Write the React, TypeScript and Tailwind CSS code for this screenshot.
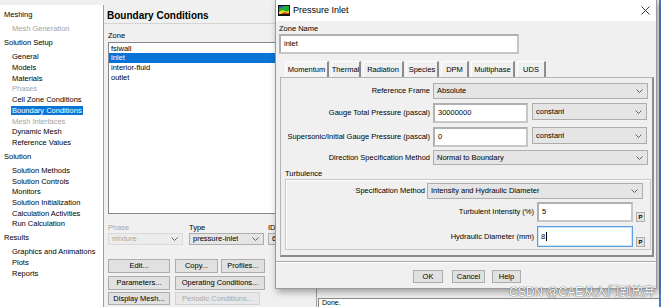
import React from 'react';

const navGroups: { title: string; items: [string, boolean?][] }[] = [
    { title: 'Meshing', items: [['Mesh Generation', true]] },
    {
        title: 'Solution Setup',
        items: [
            ['General'], ['Models'], ['Materials'], ['Phases', true], ['Cell Zone Conditions'],
            ['Boundary Conditions'], ['Mesh Interfaces', true], ['Dynamic Mesh'], ['Reference Values'],
        ],
    },
    {
        title: 'Solution',
        items: [
            ['Solution Methods'], ['Solution Controls'], ['Monitors'], ['Solution Initialization'],
            ['Calculation Activities'], ['Run Calculation'],
        ],
    },
    { title: 'Results', items: [['Graphics and Animations'], ['Plots'], ['Reports']] },
];

const tabs: [string, string][] = [
    ['Momentum', 'w-[44px]'],
    ['Thermal', 'w-[30px]'],
    ['Radiation', 'w-[41px]'],
    ['Species', 'w-[33px]'],
    ['DPM', 'w-[28px]'],
    ['Multiphase', 'w-[44px]'],
    ['UDS', 'w-[29px]'],
];

const Chevron = () => (
    <svg width="7" height="4" viewBox="0 0 7 4" className="shrink-0">
        <polyline points="0.5,0.5 3.5,3.5 6.5,0.5" fill="none" stroke="#606060" strokeWidth="1" />
    </svg>
);

const Select = ({ value, className, muted }: { value: string; className: string; muted?: boolean }) => (
    <div
        className={`flex shrink-0 items-center justify-between border pl-[3px] pr-[4px] ${
            muted ? 'border-[#d9d9d9] bg-[#ececec] text-[#a8a8a8]' : 'border-[#adadad] bg-[#e5e5e5] text-black'
        } ${className}`}
    >
        <span className="truncate">{value}</span>
        <Chevron />
    </div>
);

const Field = ({ value, className, focus }: { value: string; className: string; focus?: boolean }) => (
    <div
        className={`flex shrink-0 items-center bg-white pl-[3px] ${
            focus ? 'border border-[#5c9ce0] ring-1 ring-inset ring-[#cfe3f8]' : 'border-2 border-[#c6c6c6] border-t-[#b0b0b0] border-l-[#b0b0b0]'
        } ${className}`}
    >
        {value}
        {focus && <span className="ml-[1px] h-[9px] w-px bg-black" />}
    </div>
);

const Btn = ({ label, className, disabled }: { label: string; className: string; disabled?: boolean }) => (
    <div
        className={`flex shrink-0 items-center justify-center border ${
            disabled ? 'border-[#d3d3d3] bg-[#e8e8e8] text-[#a8a8a8]' : 'border-[#adadad] bg-[#e1e1e1] text-black'
        } ${className}`}
    >
        {label}
    </div>
);

const PBtn = () => (
    <div className="flex h-[10px] w-[9px] shrink-0 items-center justify-center self-end border border-[#adadad] bg-[#e1e1e1] text-[6px] font-bold">
        P
    </div>
);

const FluentIcon = () => (
    <svg width="12" height="11" viewBox="0 0 12 11">
        <rect x="0" y="0" width="12" height="11" fill="#111" />
        <rect x="1" y="1" width="10" height="9" fill="#1faa3a" />
        <path d="M1 7 Q4 4 7 6 T11 5 L11 10 L1 10 Z" fill="#e8e020" />
        <path d="M3 9 Q6 6 9 8 L11 8 L11 10 L3 10 Z" fill="#e03020" />
        <path d="M1 1 L6 1 Q4 3 1 3 Z" fill="#2050d0" />
        <rect x="1" y="9" width="10" height="1" fill="#1a1a1a" />
    </svg>
);

export default function App() {
    return (
        <div className="relative flex h-[307px] w-[661px] overflow-hidden bg-[#f0f0f0] font-['Liberation_Sans',Arial,sans-serif] text-[7.5px] leading-[10px] text-black">
            {/* navigation tree */}
            <nav className="mt-[5px] w-[104px] shrink-0 border-r border-[#a0a0a0] bg-white pt-[2px]">
                {navGroups.map(group => (
                    <div key={group.title}>
                        <div className="py-[3.3px] pl-[4px] leading-[10.7px]">{group.title}</div>
                        {group.items.map(([label, dim]) => (
                            <div key={label} className="pl-[11px] leading-[10.7px]">
                                <span
                                    className={
                                        label === 'Boundary Conditions'
                                            ? 'bg-[#0a74d6] px-[1px] text-white'
                                            : dim
                                            ? 'px-[1px] text-[#a3a3a3]'
                                            : 'px-[1px]'
                                    }
                                >
                                    {label}
                                </span>
                            </div>
                        ))}
                    </div>
                ))}
            </nav>

            {/* boundary conditions task page */}
            <section className="w-[212px] shrink-0 pt-[4px]">
                <div className="flex h-[20px] items-end border-b border-[#d4d4d4] pb-[1px] pl-[3px] text-[10px] font-bold leading-[12px]">
                    Boundary Conditions
                </div>
                <div className="mt-[7px] pl-[4px]">Zone</div>
                <div className="ml-[4px] mt-[1px] h-[172px] w-[210px] border border-[#828790] bg-white pt-[0.5px] leading-[9.7px]">
                    <div className="pl-[2px]">fsiwall</div>
                    <div className="bg-[#0a74d6] pl-[2px] text-white">inlet</div>
                    <div className="pl-[2px]">interior-fluid</div>
                    <div className="pl-[2px]">outlet</div>
                </div>
                <div className="ml-[4px] mt-[9px] flex gap-[6px]">
                    <div className="w-[75px]">
                        <div className="text-[#a8a8a8]">Phase</div>
                        <Select value="mixture" muted className="h-[12px] w-[75px]" />
                    </div>
                    <div className="w-[75px]">
                        <div>Type</div>
                        <Select value="pressure-inlet" className="h-[12px] w-[75px]" />
                    </div>
                    <div className="ml-[-2px] w-[40px]">
                        <div>ID</div>
                        <Select value="6" className="h-[12px] w-[40px]" />
                    </div>
                </div>
                <div className="ml-[4px] mt-[14px] flex gap-[5px]">
                    <Btn label="Edit..." className="h-[14px] w-[62px]" />
                    <Btn label="Copy..." className="h-[14px] w-[43px]" />
                    <Btn label="Profiles..." className="-ml-[2px] h-[14px] w-[44px]" />
                </div>
                <div className="ml-[4px] mt-[3px] flex gap-[5px]">
                    <Btn label="Parameters..." className="h-[14px] w-[62px]" />
                    <Btn label="Operating Conditions..." className="h-[14px] w-[90px]" />
                </div>
                <div className="ml-[4px] mt-[2px] flex gap-[5px]">
                    <Btn label="Display Mesh..." className="h-[13px] w-[62px]" />
                    <Btn label="Periodic Conditions..." disabled className="h-[13px] w-[85px]" />
                </div>
            </section>

            {/* graphics / console side */}
            <div className="flex flex-1 border-l border-[#a0a0a0]">
                <div className="flex flex-1 flex-col">
                    <div className="flex-1" />
                    <div className="ml-[1px] h-[9px] border-l border-t border-[#8a8a8a] bg-white pl-[3px] text-[7px] leading-[8px]">
                        Done.
                    </div>
                </div>
                <div className="w-[2px] bg-[#4d7bc0]" />
            </div>

            {/* Pressure Inlet dialog */}
            <div className="absolute left-[275px] top-0 flex h-[289px] w-[382px] flex-col border border-t-0 border-[#9a9a9a] bg-[#f0f0f0] shadow-[2px_3px_7px_rgba(0,0,0,0.35)]">
                <div className="flex h-[21px] shrink-0 items-center bg-white pl-[2px] pr-[6px]">
                    <FluentIcon />
                    <span className="ml-[3px] text-[9px] leading-[11px]">Pressure Inlet</span>
                    <svg width="9" height="9" viewBox="0 0 9 9" className="ml-auto">
                        <path d="M0.5 0.5 L8.5 8.5 M8.5 0.5 L0.5 8.5" stroke="#222" strokeWidth="0.9" />
                    </svg>
                </div>

                <div className="mt-[3px] pl-[3px]">Zone Name</div>
                <Field value="inlet" className="ml-[3px] h-[20px] w-[240px]" />

                <div className="ml-[9px] mt-[7px] flex h-[16px] gap-[2px]">
                    {tabs.map(([label, w]) => (
                        <div
                            key={label}
                            className={`flex items-center justify-center border-l border-t border-r-2 border-l-white border-t-white border-r-[#8c8c8c] ${w} ${
                                label === 'Momentum' ? 'bg-[#f4f4f4]' : ''
                            }`}
                        >
                            {label}
                        </div>
                    ))}
                </div>

                <div className="ml-[4px] h-[180px] w-[374px] border-b-2 border-l border-r-2 border-t border-b-[#8c8c8c] border-l-[#b4b4b4] border-r-[#8c8c8c] border-t-[#b4b4b4]">
                    <div className="mt-[5px] flex items-center">
                        <div className="w-[149px] text-right">Reference Frame</div>
                        <Select value="Absolute" className="ml-[3px] h-[16px] w-[215px]" />
                    </div>
                    <div className="mt-[4px] flex items-start">
                        <div className="w-[149px] self-center text-right">Gauge Total Pressure (pascal)</div>
                        <Field value="30000000" className="ml-[3px] h-[20px] w-[95px]" />
                        <Select value="constant" className="ml-[4px] h-[17px] w-[115px]" />
                    </div>
                    <div className="mt-[4px] flex items-start">
                        <div className="w-[149px] self-center text-right">Supersonic/Initial Gauge Pressure (pascal)</div>
                        <Field value="0" className="ml-[3px] h-[20px] w-[95px]" />
                        <Select value="constant" className="ml-[4px] h-[17px] w-[115px]" />
                    </div>
                    <div className="mt-[3px] flex items-center">
                        <div className="w-[149px] text-right">Direction Specification Method</div>
                        <Select value="Normal to Boundary" className="ml-[3px] h-[15px] w-[215px]" />
                    </div>

                    <div className="mt-[4px] pl-[4px]">Turbulence</div>
                    <div className="ml-[4px] h-[71px] w-[366px] border border-[#c9c9c9] shadow-[inset_1px_1px_0_#fff]">
                        <div className="mt-[3px] flex items-center">
                            <div className="w-[139px] text-right">Specification Method</div>
                            <Select value="Intensity and Hydraulic Diameter" className="ml-[2px] h-[16px] w-[216px]" />
                        </div>
                        <div className="mt-[3px] flex">
                            <div className="w-[248px] self-center text-right">Turbulent Intensity (%)</div>
                            <Field value="5" className="ml-[3px] h-[20px] w-[96px]" />
                            <div className="ml-[3px] flex">
                                <PBtn />
                            </div>
                        </div>
                        <div className="mt-[4px] flex">
                            <div className="w-[248px] self-center text-right">Hydraulic Diameter (mm)</div>
                            <Field value="8" focus className="ml-[3px] h-[21px] w-[96px]" />
                            <div className="ml-[3px] flex">
                                <PBtn />
                            </div>
                        </div>
                    </div>
                </div>

                <div className="mt-[4px] border-t border-[#a8a8a8] shadow-[0_1px_0_#fff]" />
                <div className="mt-[8px] flex pl-[137px]">
                    <Btn label="OK" className="h-[13px] w-[30px]" />
                    <Btn label="Cancel" className="ml-[9px] h-[13px] w-[33px]" />
                    <Btn label="Help" className="ml-[7px] h-[13px] w-[29px]" />
                </div>
            </div>

            <div className="absolute left-[509px] top-[284px] font-['Liberation_Sans','Noto_Sans_CJK_SC',sans-serif] text-[12px] leading-[16px] text-white [text-shadow:0_0_1px_#555,0_0_1px_#555]">
                CSDN @CAE从入门到放弃
            </div>
        </div>
    );
}
